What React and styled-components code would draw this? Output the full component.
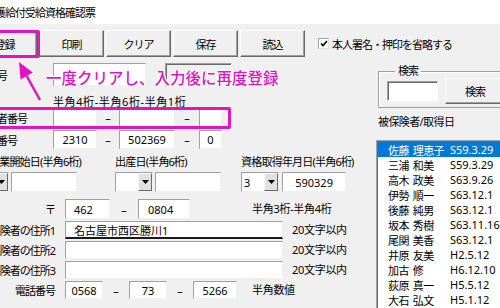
import styled, { createGlobalStyle } from "styled-components"

const members = [
  ["佐藤", "理恵子", "S59.3.29"],
  ["三浦", "和美", "S59.3.29"],
  ["高木", "政美", "S63.9.26"],
  ["伊勢", "順一", "S63.12.1"],
  ["後藤", "純男", "S63.12.1"],
  ["坂本", "秀樹", "S63.11.16"],
  ["尾関", "美香", "S63.12.1"],
  ["井原", "友美", "H2.5.12"],
  ["加古", "修", "H6.12.10"],
  ["荻原", "真一", "H5.5.12"],
  ["大石", "弘文", "H5.1.12"],
]

const PINK = "#e014c0"

const GlobalStyle = createGlobalStyle`
  html, body { margin: 0; padding: 0; }
  body {
    background: #f0f0f0;
    font-family: "Noto Sans", "Noto Sans CJK JP", sans-serif;
    font-size: 11px;
    color: #000;
  }
`

const Window = styled.div`
  position: relative;
  width: 500px;
  height: 308px;
  overflow: hidden;
  background: #f0f0f0;
`

const TitleBar = styled.div`
  height: 24px;
  background: #fff;
  display: flex;
  align-items: center;
`

const Title = styled.span`
  margin-left: -15px;
  letter-spacing: -1px;
  white-space: nowrap;
`

const Toolbar = styled.div`
  display: flex;
  align-items: center;
  gap: 2px;
  padding-top: 6px;
  margin-left: -28px;
`

const ToolButton = styled.button`
  width: ${(p) => p.$w || 65}px;
  height: ${(p) => p.$h || 27}px;
  flex-shrink: 0;
  box-sizing: border-box;
  background: #f0f0f0;
  border: 1px solid;
  border-color: #fff #696969 #696969 #fff;
  box-shadow: inset -1px -1px #a0a0a0;
  font: inherit;
  letter-spacing: -1px;
  color: #000;
  padding: 0;
`

const CheckRow = styled.label`
  display: flex;
  align-items: center;
  gap: 3px;
  margin-left: 11px;
  white-space: nowrap;
  letter-spacing: -1px;
`

const CheckBox = styled.span`
  width: 11px;
  height: 11px;
  box-sizing: border-box;
  background: #fff;
  border: 1px solid;
  border-color: #a0a0a0 #e3e3e3 #e3e3e3 #a0a0a0;
  display: flex;
  align-items: center;
  justify-content: center;
`

const Body = styled.div`
  display: flex;
  align-items: flex-start;
`

const LeftCol = styled.div`
  width: 376px;
  flex-shrink: 0;
  padding-top: 6px;
  display: flex;
  flex-direction: column;
`

const Row = styled.div`
  display: flex;
  align-items: center;
  height: ${(p) => p.$h}px;
  margin-top: ${(p) => p.$mt || 0}px;
  white-space: nowrap;
`

const Label = styled.span`
  flex-shrink: 0;
  width: ${(p) => p.$w}px;
  margin-left: ${(p) => p.$ml || 0}px;
  margin-right: ${(p) => p.$mr || 0}px;
  text-align: ${(p) => p.$align || "left"};
  letter-spacing: -1px;
  white-space: nowrap;
`

const Hint = styled.span`
  margin-left: ${(p) => p.$ml || 0}px;
  margin-top: ${(p) => p.$mt || 0}px;
  line-height: 12px;
  letter-spacing: ${(p) => p.$ls ?? -0.3}px;
  white-space: nowrap;
`

const Field = styled.input`
  box-sizing: border-box;
  width: ${(p) => p.$w}px;
  height: 100%;
  flex-shrink: 0;
  margin-left: ${(p) => p.$ml || 0}px;
  border: 1px solid;
  border-color: #a0a0a0 #f0f0f0 #f0f0f0 #a0a0a0;
  border-bottom: ${(p) => (p.$focus ? "2px solid #1a1a1a" : "1px solid #f0f0f0")};
  background: #fff;
  font: inherit;
  color: #000;
  text-align: ${(p) => p.$align || "center"};
  padding: 0 ${(p) => p.$pad || 0}px;
  outline: none;
`

const Sunken = styled.div`
  box-sizing: border-box;
  width: ${(p) => p.$w}px;
  height: 24px;
  margin-left: ${(p) => p.$ml || 0}px;
  border: 1px solid;
  border-color: #a0a0a0 #fff #fff #a0a0a0;
  box-shadow: inset 1px 1px #696969;
  background: #f0f0f0;
`

const Dash = styled.span`
  width: ${(p) => p.$w}px;
  flex-shrink: 0;
  text-align: center;
`

const DateGroups = styled.div`
  display: flex;
  margin-left: ${(p) => p.$ml}px;
  margin-top: 6px;
`

const DateGroup = styled.div`
  display: flex;
  flex-direction: column;
  margin-left: ${(p) => p.$ml || 0}px;
`

const DateLabel = styled.span`
  line-height: 14px;
  margin-left: ${(p) => p.$ml || 0}px;
  letter-spacing: -0.8px;
  white-space: nowrap;
`

const DateInputs = styled.div`
  display: flex;
  gap: ${(p) => p.$gap || 2}px;
  height: 20px;
  margin-top: 3px;
`

const Combo = styled.div`
  box-sizing: border-box;
  width: ${(p) => p.$w}px;
  height: 100%;
  display: flex;
  border: 1px solid;
  border-color: #a0a0a0 #f0f0f0 #f0f0f0 #a0a0a0;
  background: #fff;
`

const ComboValue = styled.span`
  flex: 1;
  display: flex;
  align-items: center;
  padding-left: 2px;
`

const ComboArrow = styled.span`
  width: 14px;
  box-sizing: border-box;
  background: #e1e1e1;
  border: 1px solid;
  border-color: #fff #696969 #696969 #fff;
  display: flex;
  align-items: center;
  justify-content: center;
`

const RightCol = styled.div`
  width: 140px;
  flex-shrink: 0;
  display: flex;
  flex-direction: column;
`

const GroupBox = styled.fieldset`
  margin: 8px 0 0 2px;
  padding: 1px 0 3px 8px;
  border: 1px solid #a0a0a0;
  box-shadow: inset 1px 1px #fff;
  min-width: 0;
`

const Legend = styled.legend`
  margin-left: 8px;
  padding: 0 3px;
  line-height: 12px;
  letter-spacing: -1px;
`

const SearchRow = styled.div`
  display: flex;
  align-items: center;
  gap: 7px;
`

const SearchField = styled.input`
  box-sizing: border-box;
  width: 51px;
  height: 20px;
  border: 1px solid;
  border-color: #a0a0a0 #fff #fff #a0a0a0;
  box-shadow: inset 1px 1px #696969;
  background: #fff;
  outline: none;
`

const ListTitle = styled.span`
  margin: 8px 0 0 2px;
  line-height: 12px;
  letter-spacing: -0.6px;
  white-space: nowrap;
`

const ListBox = styled.div`
  margin-top: 12px;
  padding: 1px;
  border: 1px solid;
  border-color: #a0a0a0 #fff #fff #a0a0a0;
  box-shadow: inset 1px 1px #696969;
  background: #fff;
`

const ListItem = styled.div`
  display: flex;
  align-items: center;
  height: 15px;
  padding-left: 10px;
  white-space: nowrap;
  background: ${(p) => (p.$selected ? "#0078d7" : "transparent")};
  color: ${(p) => (p.$selected ? "#fff" : "#000")};
`

const ItemName = styled.span`
  width: 62px;
  flex-shrink: 0;
  display: flex;
  gap: 4px;
  letter-spacing: -0.6px;
`

const PinkFrame = styled.div`
  position: absolute;
  left: ${(p) => p.$x}px;
  top: ${(p) => p.$y}px;
  width: ${(p) => p.$w}px;
  height: ${(p) => p.$h}px;
  box-sizing: border-box;
  border: 3px solid ${PINK};
  border-radius: 2px;
`

const PinkArrow = styled.svg`
  position: absolute;
  left: 14px;
  top: 58px;
`

const Annotation = styled.span`
  position: absolute;
  left: 46px;
  top: 66px;
  font-family: "Noto Sans CJK JP", sans-serif;
  font-size: 15.5px;
  font-weight: 500;
  line-height: 22px;
  color: ${PINK};
  white-space: nowrap;
  text-shadow: 1px 0 #fff, -1px 0 #fff, 0 1px #fff, 0 -1px #fff, 1px 1px #fff, -1px -1px #fff, 1px -1px #fff, -1px 1px #fff;
`

const Triangle = () => (
  <svg width="7" height="4" viewBox="0 0 7 4">
    <polygon points="0,0 7,0 3.5,4" fill="#000" />
  </svg>
)

const NumberRow = ({ label, values, mt }) => (
  <Row $h={19} $mt={mt}>
    <Label $w={86} $ml={-33}>{label}</Label>
    <Field readOnly $w={44} value={values[0]} />
    <Dash $w={22}>–</Dash>
    <Field readOnly $w={56} value={values[1]} />
    <Dash $w={24}>–</Dash>
    <Field readOnly $w={23} value={values[2]} />
  </Row>
)

const AddressRow = ({ label, value, focus, mt }) => (
  <Row $h={18} $mt={mt}>
    <Label $w={95} $ml={-40} $mr={10} $align="right">{label}</Label>
    <Field readOnly $w={218} $align="left" $pad={8} $focus={focus} value={value} />
    <Hint $ml={9}>20文字以内</Hint>
  </Row>
)

export default function App() {
  return (
    <Window>
      <GlobalStyle />
      <TitleBar>
        <Title>介護給付受給資格確認票</Title>
      </TitleBar>

      <Toolbar>
        <ToolButton>登録</ToolButton>
        <ToolButton>印刷</ToolButton>
        <ToolButton>クリア</ToolButton>
        <ToolButton>保存</ToolButton>
        <ToolButton>読込</ToolButton>
        <CheckRow>
          <CheckBox>
            <svg width="8" height="7" viewBox="0 0 8 7">
              <polyline points="1,3.5 3,5.5 7,1" fill="none" stroke="#000" strokeWidth="1.6" />
            </svg>
          </CheckBox>
          本人署名・押印を省略する
        </CheckRow>
      </Toolbar>

      <Body>
        <LeftCol>
          <Row $h={23}>
            <Label $w={86} $ml={-33}>整理番号</Label>
            <Field readOnly $w={93} value="" />
            <Sunken $w={67} $ml={19} />
          </Row>
          <Hint $ml={53} $mt={10} $ls={0.6}>半角4桁-半角6桁-半角1桁</Hint>
          <NumberRow label="被保険者番号" values={["", "", ""]} />
          <NumberRow label="保険者番号" values={["2310", "502369", "0"]} mt={3} />

          <DateGroups $ml={-30}>
            <DateGroup>
              <DateLabel $ml={19}>事業開始日(半角6桁)</DateLabel>
              <DateInputs>
                <Combo $w={39}>
                  <ComboValue />
                  <ComboArrow><Triangle /></ComboArrow>
                </Combo>
                <Field readOnly $w={66} value="" />
              </DateInputs>
            </DateGroup>
            <DateGroup $ml={34}>
              <DateLabel>出産日(半角6桁)</DateLabel>
              <DateInputs>
                <Combo $w={38}>
                  <ComboValue />
                  <ComboArrow><Triangle /></ComboArrow>
                </Combo>
                <Field readOnly $w={66} value="" />
              </DateInputs>
            </DateGroup>
            <DateGroup $ml={20}>
              <DateLabel>資格取得年月日(半角6桁)</DateLabel>
              <DateInputs $gap={3}>
                <Combo $w={38}>
                  <ComboValue>3</ComboValue>
                  <ComboArrow><Triangle /></ComboArrow>
                </Combo>
                <Field readOnly $w={64} value="590329" />
              </DateInputs>
            </DateGroup>
          </DateGroups>

          <Row $h={20} $mt={7}>
            <Label $w={95} $ml={-40} $mr={10} $align="right">〒</Label>
            <Field readOnly $w={45} $align="left" $pad={8} value="462" />
            <Dash $w={28}>–</Dash>
            <Field readOnly $w={52} $align="left" $pad={9} value="0804" />
            <Hint $ml={62}>半角3桁-半角4桁</Hint>
          </Row>
          <AddressRow label="被保険者の住所1" value="名古屋市西区勝川1" focus mt={2} />
          <AddressRow label="被保険者の住所2" value="" mt={2} />
          <AddressRow label="被保険者の住所3" value="" mt={2} />
          <Row $h={18} $mt={2}>
            <Label $w={95} $ml={-40} $mr={10} $align="right">電話番号</Label>
            <Field readOnly $w={38} value="0568" />
            <Dash $w={26}>–</Dash>
            <Field readOnly $w={38} value="73" />
            <Dash $w={26}>–</Dash>
            <Field readOnly $w={44} value="5266" />
            <Hint $ml={15}>半角数値</Hint>
          </Row>
        </LeftCol>

        <RightCol>
          <GroupBox>
            <Legend>検索</Legend>
            <SearchRow>
              <SearchField readOnly />
              <ToolButton $w={60} $h={26}>検索</ToolButton>
            </SearchRow>
          </GroupBox>
          <ListTitle>被保険者/取得日</ListTitle>
          <ListBox>
            {members.map(([last, first, date], i) => (
              <ListItem key={last} $selected={i === 0}>
                <ItemName>
                  <span>{last}</span>
                  <span>{first}</span>
                </ItemName>
                <span>{date}</span>
              </ListItem>
            ))}
          </ListBox>
        </RightCol>
      </Body>

      <PinkFrame $x={-10} $y={30} $w={50} $h={28} />
      <PinkFrame $x={-10} $y={107} $w={241} $h={22} />
      <PinkArrow width="32" height="46" viewBox="0 0 32 46">
        <line x1="12.7" y1="18" x2="26" y2="42" stroke={PINK} strokeWidth="2.5" />
        <polygon points="5,4 18.8,14.6 6.6,21.4" fill={PINK} />
      </PinkArrow>
      <Annotation>一度クリアし、入力後に再度登録</Annotation>
    </Window>
  )
}
